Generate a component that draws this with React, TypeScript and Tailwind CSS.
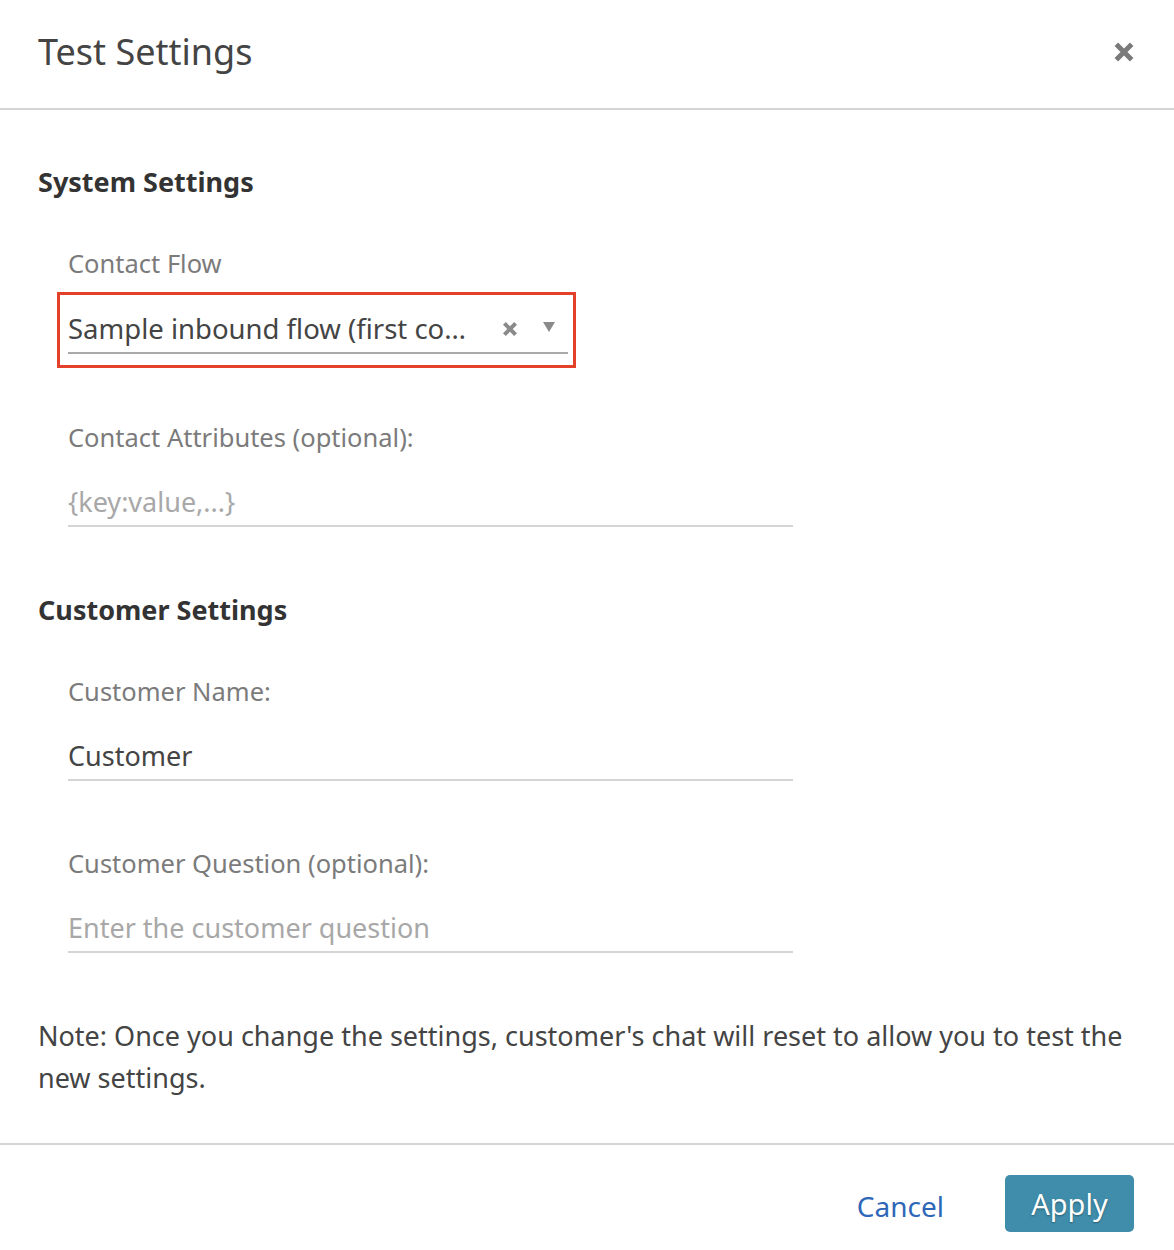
import React from 'react';

function CloseIcon({ size, stroke, className }: { size: number; stroke: number; className?: string }) {
  return (
    <svg width={size} height={size} viewBox="0 0 20 20" className={className} aria-hidden="true">
      <path d="M3 3 L17 17 M17 3 L3 17" stroke="currentColor" strokeWidth={stroke} strokeLinecap="butt" fill="none" />
    </svg>
  );
}

function Label({ children, className = '' }: { children: React.ReactNode; className?: string }) {
  return <div className={`h-[40px] leading-[40px] text-[25.5px] text-[#7b7b7b] ${className}`}>{children}</div>;
}

function TextInput({ value, placeholder, className = '' }: { value?: string; placeholder: string; className?: string }) {
  return (
    <div className={`w-[725px] h-[48px] flex items-center border-b-2 border-[#d5d5d5] ${className}`}>
      {value ? (
        <span className="text-[27px] text-[#444]">{value}</span>
      ) : (
        <span className="text-[27px] text-[#a8a8a8]">{placeholder}</span>
      )}
    </div>
  );
}

export default function App() {
  return (
    <div className="w-[1174px] h-[1250px] bg-white font-['Noto_Sans',sans-serif] overflow-hidden">
      <div className="h-[110px] px-[38px] flex items-center justify-between border-b-2 border-[#d5d5d5]">
        <h1 className="text-[36px] text-[#444] -mt-[4px]">Test Settings</h1>
        <button className="text-[#7a7a7a] mr-[1px] -mt-[4px]">
          <CloseIcon size={22} stroke={4.5} />
        </button>
      </div>

      <div className="pl-[38px] pb-[44px] border-b-2 border-[#d5d5d5]">
        <h2 className="mt-[52px] h-[40px] leading-[40px] text-[27px] font-bold text-[#333]">System Settings</h2>

        <div className="pl-[30px]">
          <Label className="mt-[41px]">Contact Flow</Label>

          <div className="mt-[9px] -ml-[11px] w-[519px] border-[3px] border-[#e4412a] pl-[8px] pr-[5px] pt-[11px] pb-[11px]">
            <div className="h-[48px] flex items-center border-b-2 border-[#a9a9a9]">
              <span className="flex-1 text-[27.5px] text-[#444] whitespace-nowrap">Sample inbound flow (first co…</span>
              <CloseIcon size={16} stroke={5} className="text-[#8a8a8a] mr-[25px]" />
              <svg width="12" height="10" viewBox="0 0 12 10" className="text-[#8a8a8a] mr-[13px] -mt-[4px]" aria-hidden="true">
                <path d="M0 0 L12 0 L6 10 Z" fill="currentColor" />
              </svg>
            </div>
          </div>

          <Label className="mt-[49px]">Contact Attributes (optional):</Label>
          <TextInput className="mt-[22px]" placeholder="{key:value,...}" />
        </div>

        <h2 className="mt-[63px] h-[40px] leading-[40px] text-[27px] font-bold text-[#333]">Customer Settings</h2>

        <div className="pl-[30px]">
          <Label className="mt-[41px]">Customer Name:</Label>
          <TextInput className="mt-[22px]" value="Customer" placeholder="" />

          <Label className="mt-[62px]">Customer Question (optional):</Label>
          <TextInput className="mt-[22px]" placeholder="Enter the customer question" />
        </div>

        <p className="mt-[62px] pr-[40px] text-[27px] leading-[42px] text-[#444]">
          Note: Once you change the settings, customer's chat will reset to allow you to test the new settings.
        </p>
      </div>

      <div className="flex justify-end items-center pr-[40px] pt-[30px]">
        <button className="text-[28px] text-[#2f67b8] mr-[61px] mt-[4px]">Cancel</button>
        <button className="w-[129px] h-[57px] rounded-[5px] bg-[#3f8dab] text-white text-[29px] [text-shadow:0_1px_2px_rgba(0,0,0,0.35)]">
          Apply
        </button>
      </div>
    </div>
  );
}
